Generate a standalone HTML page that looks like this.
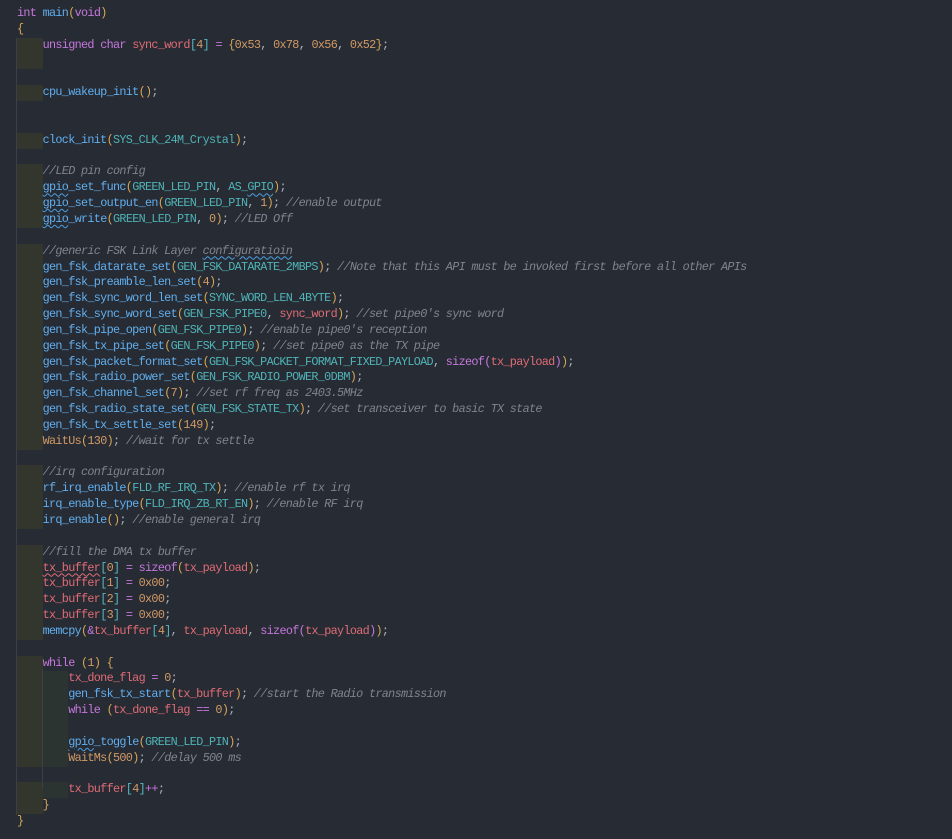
<!DOCTYPE html>
<html><head><meta charset="utf-8"><style>
html,body{margin:0;padding:0;background:#272b33;width:952px;height:839px;overflow:hidden}
#c{position:relative;padding-top:6px;font-family:"Liberation Mono",monospace;font-size:11.8px;letter-spacing:-0.68px;color:#abb2bf}
.l{height:15.85px;line-height:15.85px;white-space:pre;padding-left:17px;position:relative}
.i,.j{display:inline-block;width:25.6px;height:15.85px;vertical-align:top}
.i{background:#33362d}
.j{background:#2c3431}
.k{color:#c678dd}.f{color:#61afef}.p{color:#d8a657}.n{color:#d19a66}.v{color:#e06c75}.c{color:#7f848e;font-style:italic}.t{color:#4fb4b8}.b{color:#56b6c2}.o{color:#c678dd}.m{color:#d19a66}.pp{color:#c678dd}
.w{text-decoration:underline wavy #4a9fe0;text-decoration-thickness:1px;text-underline-offset:2px}
.wr{text-decoration:underline wavy #e06c75;text-decoration-thickness:1px;text-underline-offset:2px}
.g{position:absolute;width:1px;background:#3a3f4a;z-index:2}
</style></head><body><div id="c">
<div class="g" style="left:16px;top:38px;height:777px"></div>
<div class="g" style="left:42px;top:669px;height:120px"></div>
<div class="l"><span class="k">int</span> <span class="f">main</span><span class="p">(</span><span class="k">void</span><span class="p">)</span></div>
<div class="l"><span class="p">{</span></div>
<div class="l"><span class="i"></span><span class="k">unsigned</span> <span class="k">char</span> <span class="v">sync_word</span><span class="b">[</span><span class="n">4</span><span class="b">]</span> <span class="o">=</span> <span class="p">{</span><span class="n">0x53</span>, <span class="n">0x78</span>, <span class="n">0x56</span>, <span class="n">0x52</span><span class="p">}</span>;</div>
<div class="l"><span class="i"></span></div>
<div class="l"></div>
<div class="l"><span class="i"></span><span class="f">cpu_wakeup_init</span><span class="p">()</span>;</div>
<div class="l"></div>
<div class="l"></div>
<div class="l"><span class="i"></span><span class="f">clock_init</span><span class="p">(</span><span class="t">SYS_CLK_24M_Crystal</span><span class="p">)</span>;</div>
<div class="l"></div>
<div class="l"><span class="i"></span><span class="c">//LED pin config</span></div>
<div class="l"><span class="i"></span><span class="f"><span class="w">gpio</span>_set_func</span><span class="p">(</span><span class="t">GREEN_LED_PIN</span>, <span class="t">AS_<span class="w">GPIO</span></span><span class="p">)</span>;</div>
<div class="l"><span class="i"></span><span class="f"><span class="w">gpio</span>_set_output_en</span><span class="p">(</span><span class="t">GREEN_LED_PIN</span>, <span class="n">1</span><span class="p">)</span>; <span class="c">//enable output</span></div>
<div class="l"><span class="i"></span><span class="f"><span class="w">gpio</span>_write</span><span class="p">(</span><span class="t">GREEN_LED_PIN</span>, <span class="n">0</span><span class="p">)</span>; <span class="c">//LED Off</span></div>
<div class="l"></div>
<div class="l"><span class="i"></span><span class="c">//generic FSK Link Layer <span class="w">configuratioin</span></span></div>
<div class="l"><span class="i"></span><span class="f">gen_fsk_datarate_set</span><span class="p">(</span><span class="t">GEN_FSK_DATARATE_2MBPS</span><span class="p">)</span>; <span class="c">//Note that this API must be invoked first before all other APIs</span></div>
<div class="l"><span class="i"></span><span class="f">gen_fsk_preamble_len_set</span><span class="p">(</span><span class="n">4</span><span class="p">)</span>;</div>
<div class="l"><span class="i"></span><span class="f">gen_fsk_sync_word_len_set</span><span class="p">(</span><span class="t">SYNC_WORD_LEN_4BYTE</span><span class="p">)</span>;</div>
<div class="l"><span class="i"></span><span class="f">gen_fsk_sync_word_set</span><span class="p">(</span><span class="t">GEN_FSK_PIPE0</span>, <span class="v">sync_word</span><span class="p">)</span>; <span class="c">//set pipe0's sync word</span></div>
<div class="l"><span class="i"></span><span class="f">gen_fsk_pipe_open</span><span class="p">(</span><span class="t">GEN_FSK_PIPE0</span><span class="p">)</span>; <span class="c">//enable pipe0's reception</span></div>
<div class="l"><span class="i"></span><span class="f">gen_fsk_tx_pipe_set</span><span class="p">(</span><span class="t">GEN_FSK_PIPE0</span><span class="p">)</span>; <span class="c">//set pipe0 as the TX pipe</span></div>
<div class="l"><span class="i"></span><span class="f">gen_fsk_packet_format_set</span><span class="p">(</span><span class="t">GEN_FSK_PACKET_FORMAT_FIXED_PAYLOAD</span>, <span class="k">sizeof</span><span class="pp">(</span><span class="v">tx_payload</span><span class="pp">)</span><span class="p">)</span>;</div>
<div class="l"><span class="i"></span><span class="f">gen_fsk_radio_power_set</span><span class="p">(</span><span class="t">GEN_FSK_RADIO_POWER_0DBM</span><span class="p">)</span>;</div>
<div class="l"><span class="i"></span><span class="f">gen_fsk_channel_set</span><span class="p">(</span><span class="n">7</span><span class="p">)</span>; <span class="c">//set rf freq as 2403.5MHz</span></div>
<div class="l"><span class="i"></span><span class="f">gen_fsk_radio_state_set</span><span class="p">(</span><span class="t">GEN_FSK_STATE_TX</span><span class="p">)</span>; <span class="c">//set transceiver to basic TX state</span></div>
<div class="l"><span class="i"></span><span class="f">gen_fsk_tx_settle_set</span><span class="p">(</span><span class="n">149</span><span class="p">)</span>;</div>
<div class="l"><span class="i"></span><span class="m">WaitUs</span><span class="p">(</span><span class="n">130</span><span class="p">)</span>; <span class="c">//wait for tx settle</span></div>
<div class="l"></div>
<div class="l"><span class="i"></span><span class="c">//irq configuration</span></div>
<div class="l"><span class="i"></span><span class="f">rf_irq_enable</span><span class="p">(</span><span class="t">FLD_RF_IRQ_TX</span><span class="p">)</span>; <span class="c">//enable rf tx irq</span></div>
<div class="l"><span class="i"></span><span class="f">irq_enable_type</span><span class="p">(</span><span class="t">FLD_IRQ_ZB_RT_EN</span><span class="p">)</span>; <span class="c">//enable RF irq</span></div>
<div class="l"><span class="i"></span><span class="f">irq_enable</span><span class="p">()</span>; <span class="c">//enable general irq</span></div>
<div class="l"></div>
<div class="l"><span class="i"></span><span class="c">//fill the DMA tx buffer</span></div>
<div class="l"><span class="i"></span><span class="v wr">tx_buffer</span><span class="b">[</span><span class="n">0</span><span class="b">]</span> <span class="o">=</span> <span class="k">sizeof</span><span class="p">(</span><span class="v">tx_payload</span><span class="p">)</span>;</div>
<div class="l"><span class="i"></span><span class="v">tx_buffer</span><span class="b">[</span><span class="n">1</span><span class="b">]</span> <span class="o">=</span> <span class="n">0x00</span>;</div>
<div class="l"><span class="i"></span><span class="v">tx_buffer</span><span class="b">[</span><span class="n">2</span><span class="b">]</span> <span class="o">=</span> <span class="n">0x00</span>;</div>
<div class="l"><span class="i"></span><span class="v">tx_buffer</span><span class="b">[</span><span class="n">3</span><span class="b">]</span> <span class="o">=</span> <span class="n">0x00</span>;</div>
<div class="l"><span class="i"></span><span class="f">memcpy</span><span class="p">(</span><span class="o">&amp;</span><span class="v">tx_buffer</span><span class="b">[</span><span class="n">4</span><span class="b">]</span>, <span class="v">tx_payload</span>, <span class="k">sizeof</span><span class="pp">(</span><span class="v">tx_payload</span><span class="pp">)</span><span class="p">)</span>;</div>
<div class="l"></div>
<div class="l"><span class="i"></span><span class="k">while</span> <span class="p">(</span><span class="n">1</span><span class="p">)</span> <span class="p">{</span></div>
<div class="l"><span class="i"></span><span class="j"></span><span class="v">tx_done_flag</span> <span class="o">=</span> <span class="n">0</span>;</div>
<div class="l"><span class="i"></span><span class="j"></span><span class="f">gen_fsk_tx_start</span><span class="p">(</span><span class="v">tx_buffer</span><span class="p">)</span>; <span class="c">//start the Radio transmission</span></div>
<div class="l"><span class="i"></span><span class="j"></span><span class="k">while</span> <span class="p">(</span><span class="v">tx_done_flag</span> <span class="o">==</span> <span class="n">0</span><span class="p">)</span>;</div>
<div class="l"><span class="i"></span><span class="j"></span></div>
<div class="l"><span class="i"></span><span class="j"></span><span class="f"><span class="w">gpio</span>_toggle</span><span class="p">(</span><span class="t">GREEN_LED_PIN</span><span class="p">)</span>;</div>
<div class="l"><span class="i"></span><span class="j"></span><span class="m">WaitMs</span><span class="p">(</span><span class="n">500</span><span class="p">)</span>; <span class="c">//delay 500 ms</span></div>
<div class="l"></div>
<div class="l"><span class="i"></span><span class="j"></span><span class="v">tx_buffer</span><span class="b">[</span><span class="n">4</span><span class="b">]</span><span class="o">++</span>;</div>
<div class="l"><span class="i"></span><span class="p">}</span></div>
<div class="l"><span class="p">}</span></div>
</div></body></html>
